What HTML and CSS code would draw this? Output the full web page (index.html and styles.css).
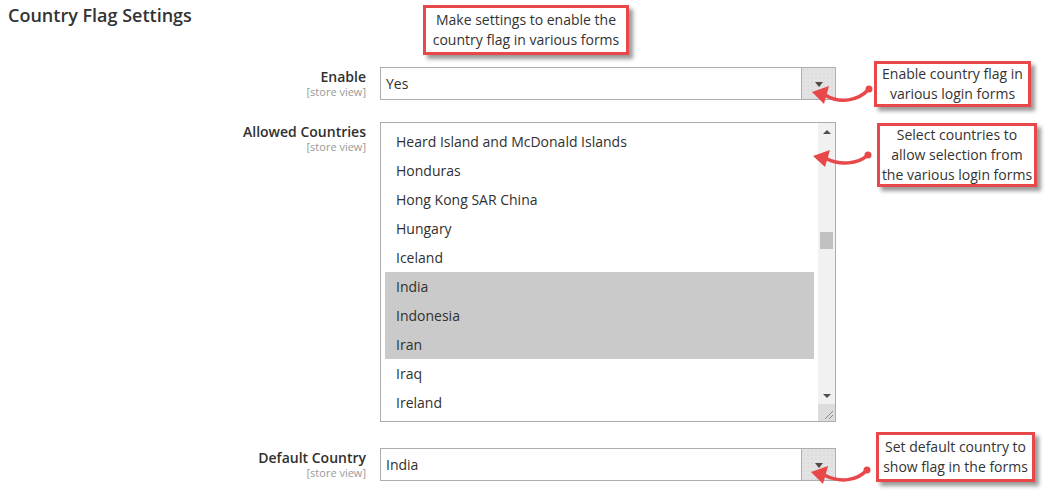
FILE: index.html
```html
<!DOCTYPE html>
<html lang="en">
<head>
<meta charset="utf-8">
<title>Country Flag Settings</title>
<link rel="stylesheet" href="styles.css">
</head>
<body>
<div class="page">
  <h1 class="title">Country Flag Settings</h1>
  <div class="form">
    <div class="row row-enable">
      <div class="label"><span class="name">Enable</span><span class="scope">[store view]</span></div>
      <div class="select"><span class="value">Yes</span><span class="arrow-box"><span class="tri"></span></span></div>
    </div>
    <div class="row row-countries">
      <div class="label"><span class="name">Allowed Countries</span><span class="scope">[store view]</span></div>
      <div class="listbox">
        <div class="options">
          <div class="opt">Heard Island and McDonald Islands</div>
          <div class="opt">Honduras</div>
          <div class="opt">Hong Kong SAR China</div>
          <div class="opt">Hungary</div>
          <div class="opt">Iceland</div>
          <div class="opt sel">India</div>
          <div class="opt sel">Indonesia</div>
          <div class="opt sel">Iran</div>
          <div class="opt">Iraq</div>
          <div class="opt">Ireland</div>
        </div>
        <div class="scrollbar">
          <span class="sb-btn"><span class="tri-up"></span></span>
          <span class="sb-track"><span class="sb-thumb"></span></span>
          <span class="sb-btn"><span class="tri-down"></span></span>
          <span class="sb-corner">
            <svg width="17" height="17" viewBox="0 0 17 17"><path d="M7 15 L15 7 M11 15 L15 11" stroke="#8a8a8a" stroke-width="1" fill="none"/></svg>
          </span>
        </div>
      </div>
    </div>
    <div class="row row-default">
      <div class="label"><span class="name">Default Country</span><span class="scope">[store view]</span></div>
      <div class="select"><span class="value">India</span><span class="arrow-box"><span class="tri"></span></span></div>
    </div>
  </div>

  <div class="callout c1">Make settings to enable the<br>country flag in various forms</div>
  <div class="callout c2">Enable country flag in<br>various login forms</div>
  <div class="callout c3">Select countries to<br>allow selection from<br>the various login forms</div>
  <div class="callout c4">Set default country to<br>show flag in the forms</div>

  <svg class="arrows" width="1051" height="492" viewBox="0 0 1051 492">
    <g fill="none" stroke="#e8484a" stroke-width="3.5" stroke-linecap="round">
      <path d="M825 95 C 840 104, 858 101, 869 89"/>
      <path d="M825 158 C 840 166, 858 164, 868 155"/>
      <path d="M824 475 C 840 483, 857 481, 867 470"/>
    </g>
    <g fill="#e8484a">
      <circle cx="869" cy="89" r="3.5"/>
      <polygon points="812,92 829,86 824,104"/>
      <circle cx="868" cy="155" r="3.5"/>
      <polygon points="813,156 830,150 825,167"/>
      <circle cx="867" cy="470" r="3.5"/>
      <polygon points="811,472 828,466 823,484"/>
    </g>
  </svg>
</div>
</body>
</html>
```

FILE: styles.css
```css
* { box-sizing: border-box; }

html, body {
  margin: 0;
  padding: 0;
  background: #ffffff;
}

body {
  font-family: "Open Sans", "Noto Sans", sans-serif;
  color: #303030;
}

.page {
  position: relative;
  width: 1051px;
  height: 492px;
  overflow: hidden;
}

.title {
  margin: 3px 0 0 0;
  padding-left: 8px;
  font-size: 18px;
  line-height: 24px;
  font-weight: 600;
  color: #333333;
}

.form {
  margin-top: 40px;
  padding-left: 8px;
}

.row {
  display: grid;
  grid-template-columns: 358px 456px;
  column-gap: 14px;
  align-items: start;
}

.row-enable { margin-bottom: 22px; }
.row-countries { margin-bottom: 26px; }

.label {
  display: flex;
  flex-direction: column;
  align-items: flex-end;
  text-align: right;
}

.name {
  font-size: 14px;
  line-height: 19px;
  font-weight: 600;
  color: #303030;
}

.scope {
  font-size: 11px;
  line-height: 12px;
  color: #999999;
}

.select {
  display: flex;
  align-items: stretch;
  height: 33px;
  border: 1px solid #adadad;
  background: #ffffff;
}

.select .value {
  flex: 1;
  padding-left: 5px;
  font-size: 14px;
  line-height: 31px;
  color: #303030;
}

.arrow-box {
  width: 34px;
  border-left: 1px solid #adadad;
  background-color: #e3e3e3;
  background-image: radial-gradient(circle, #d8d8d8 0.6px, transparent 0.9px);
  background-size: 4px 4px;
  display: flex;
  align-items: center;
  justify-content: center;
}

.tri {
  width: 0;
  height: 0;
  border-left: 4px solid transparent;
  border-right: 4px solid transparent;
  border-top: 5px solid #514943;
  margin-top: 1px;
}

.listbox {
  display: flex;
  height: 300px;
  border: 1px solid #adadad;
  background: #ffffff;
}

.options {
  flex: 1;
  padding: 4px 4px 4px 4px;
}

.opt {
  height: 29px;
  padding-left: 11px;
  font-size: 14px;
  line-height: 29px;
  color: #303030;
  white-space: nowrap;
}

.opt.sel {
  background: #cacaca;
}

.scrollbar {
  width: 17px;
  background: #f1f1f1;
  display: flex;
  flex-direction: column;
}

.sb-btn {
  height: 17px;
  display: flex;
  align-items: center;
  justify-content: center;
}

.tri-up {
  width: 0;
  height: 0;
  border-left: 4px solid transparent;
  border-right: 4px solid transparent;
  border-bottom: 4px solid #505050;
}

.tri-down {
  width: 0;
  height: 0;
  border-left: 4px solid transparent;
  border-right: 4px solid transparent;
  border-top: 4px solid #505050;
}

.sb-track {
  flex: 1;
  padding-top: 92px;
  padding-left: 2px;
}

.sb-thumb {
  display: block;
  width: 13px;
  height: 17px;
  background: #c1c1c1;
}

.sb-corner {
  height: 17px;
  background: #dcdcdc;
  display: block;
}

.sb-corner svg { display: block; }

.callout {
  position: absolute;
  border: 3px solid #e8484a;
  background: #ffffff;
  box-shadow: 4px 4px 4px rgba(0, 0, 0, 0.4);
  font-family: "Open Sans", "Noto Sans", sans-serif;
  font-size: 14px;
  line-height: 20px;
  color: #333333;
  text-align: center;
  display: flex;
  align-items: center;
  justify-content: center;
}

.c1 { left: 423px; top: 5px; width: 206px; height: 50px; }
.c2 { left: 874px; top: 61px; width: 157px; height: 46px; }
.c3 { left: 877px; top: 123px; width: 160px; height: 64px; }
.c4 { left: 876px; top: 432px; width: 159px; height: 50px; }

.arrows {
  position: absolute;
  left: 0;
  top: 0;
  pointer-events: none;
}
```
